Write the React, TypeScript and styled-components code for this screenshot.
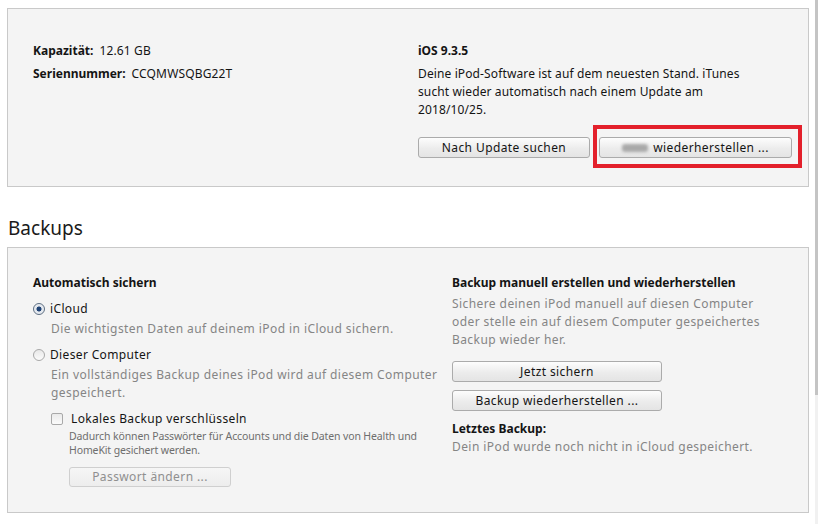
import React from "react";
import styled, { createGlobalStyle } from "styled-components";

const GlobalStyle = createGlobalStyle`
  html, body { margin: 0; padding: 0; background: #ffffff; }
  body {
    font-family: "Noto Sans", "Open Sans", sans-serif;
    font-size: 12px;
    color: #141414;
  }
  * { box-sizing: border-box; }
`;

const Page = styled.div`
  display: flex;
  width: 818px;
  height: 524px;
  overflow: hidden;
`;

const Content = styled.main`
  flex: 1;
  display: flex;
  flex-direction: column;
  padding: 8px 6px 0 7px;
`;

const Scrollbar = styled.div`
  width: 3px;
  display: flex;
  flex-direction: column;
`;

const Thumb = styled.div`
  height: 395px;
  background: #c4c4c4;
`;

const Track = styled.div`
  flex: 1;
  background: #f1f1f1;
`;

const Panel = styled.section<{ $height: number; $cols: string; $padTop: number }>`
  height: ${(p) => p.$height}px;
  background: #f4f4f4;
  border: 1px solid #c9c9c9;
  display: grid;
  grid-template-columns: ${(p) => p.$cols};
  align-items: start;
  padding: ${(p) => p.$padTop}px 0 0 25px;
`;

const Column = styled.div`
  display: flex;
  flex-direction: column;
  align-items: flex-start;
`;

const Line = styled.div<{ $mt?: number }>`
  line-height: 18px;
  margin-top: ${(p) => p.$mt ?? 0}px;
  white-space: nowrap;
  letter-spacing: 0.15px;
`;

const Label = styled.span`
  font-weight: 700;
  letter-spacing: 0;
  margin-right: 6px;
`;

const Title = styled.div<{ $mt?: number }>`
  font-weight: 700;
  line-height: 18px;
  margin-top: ${(p) => p.$mt ?? 0}px;
  white-space: nowrap;
`;

const Text = styled.p<{ $mt?: number; $indent?: number; $muted?: boolean }>`
  margin: ${(p) => p.$mt ?? 0}px 0 0 ${(p) => p.$indent ?? 0}px;
  line-height: 18px;
  letter-spacing: ${(p) => (p.$muted ? 0.42 : 0.12)}px;
  color: ${(p) => (p.$muted ? "#858585" : "#141414")};
  white-space: nowrap;
`;

const SmallText = styled.p<{ $mt?: number; $indent?: number }>`
  margin: ${(p) => p.$mt ?? 0}px 0 0 ${(p) => p.$indent ?? 0}px;
  font-size: 10.5px;
  letter-spacing: -0.12px;
  line-height: 14px;
  color: #6e6e6e;
  white-space: nowrap;
`;

const ButtonRow = styled.div<{ $mt?: number }>`
  display: flex;
  gap: 9px;
  margin-top: ${(p) => p.$mt ?? 0}px;
`;

const Button = styled.button<{ $w: number; $h?: number; $mt?: number; $ml?: number; $disabled?: boolean }>`
  width: ${(p) => p.$w}px;
  height: ${(p) => p.$h ?? 21}px;
  margin: ${(p) => p.$mt ?? 0}px 0 0 ${(p) => p.$ml ?? 0}px;
  padding: 0;
  font-family: inherit;
  font-size: 12px;
  letter-spacing: 0.4px;
  line-height: 1;
  color: ${(p) => (p.$disabled ? "#8f8f8f" : "#141414")};
  border: 1px solid ${(p) => (p.$disabled ? "#cfcfcf" : "#ababab")};
  border-radius: 3px;
  background: ${(p) =>
    p.$disabled
      ? "linear-gradient(#f6f6f6, #ededed)"
      : "linear-gradient(#fdfdfd, #ececec 55%, #e4e4e4)"};
  display: flex;
  align-items: center;
  justify-content: center;
  gap: 5px;
`;

const Blur = styled.span`
  display: inline-block;
  width: 26px;
  height: 8px;
  border-radius: 3px;
  background: #a9a9a9;
  filter: blur(1.8px);
`;

const Highlight = styled.div`
  position: relative;
  &::after {
    content: "";
    position: absolute;
    top: -12px;
    left: -6px;
    right: -10px;
    bottom: -10px;
    border: 4px solid #e3202b;
    pointer-events: none;
  }
`;

const Heading = styled.h2`
  margin: 28px 0 6px 1px;
  font-size: 19px;
  font-weight: 400;
  line-height: 26px;
  color: #1a1a1a;
`;

const OptionRow = styled.label<{ $mt?: number; $gap: number }>`
  display: flex;
  align-items: center;
  gap: ${(p) => p.$gap}px;
  margin-top: ${(p) => p.$mt ?? 0}px;
  line-height: 18px;
  letter-spacing: 0.35px;
  white-space: nowrap;
`;

const Radio = styled.span<{ $checked?: boolean }>`
  width: 12px;
  height: 12px;
  border-radius: 50%;
  border: 1px solid ${(p) => (p.$checked ? "#5d6e82" : "#a8a8a8")};
  background: ${(p) =>
    p.$checked
      ? "radial-gradient(circle, #1f4274 0 2.2px, #dfe4eb 2.8px, #f4f6f9 100%)"
      : "linear-gradient(#e8e8e8, #fbfbfb)"};
  flex: none;
`;

const Checkbox = styled.span<{ $ml?: number }>`
  width: 12px;
  height: 12px;
  margin-left: ${(p) => p.$ml ?? 0}px;
  border: 1px solid #a9a9a9;
  border-radius: 2px;
  background: linear-gradient(#eaeaea, #fbfbfb);
  flex: none;
`;

export default function App() {
  return (
    <>
      <GlobalStyle />
      <Page>
        <Content>
          <Panel $height={179} $padTop={33} $cols="385px 1fr">
            <Column>
              <Line>
                <Label>Kapazität:</Label>12.61 GB
              </Line>
              <Line $mt={5}>
                <Label>Seriennummer:</Label>CCQMWSQBG22T
              </Line>
            </Column>
            <Column>
              <Title>iOS 9.3.5</Title>
              <Text $mt={5}>
                Deine iPod-Software ist auf dem neuesten Stand. iTunes
                <br />
                sucht wieder automatisch nach einem Update am
                <br />
                2018/10/25.
              </Text>
              <ButtonRow $mt={18}>
                <Button $w={172}>Nach Update suchen</Button>
                <Highlight>
                  <Button $w={193}>
                    <Blur />
                    wiederherstellen ...
                  </Button>
                </Highlight>
              </ButtonRow>
            </Column>
          </Panel>

          <Heading>Backups</Heading>

          <Panel $height={266} $padTop={26} $cols="419px 1fr">
            <Column>
              <Title>Automatisch sichern</Title>
              <OptionRow $mt={8} $gap={5}>
                <Radio $checked />
                iCloud
              </OptionRow>
              <Text $mt={2} $indent={18} $muted>
                Die wichtigsten Daten auf deinem iPod in iCloud sichern.
              </Text>
              <OptionRow $mt={8} $gap={5}>
                <Radio />
                Dieser Computer
              </OptionRow>
              <Text $mt={2} $indent={18} $muted>
                Ein vollständiges Backup deines iPod wird auf diesem Computer
                <br />
                gespeichert.
              </Text>
              <OptionRow $mt={8} $gap={8}>
                <Checkbox $ml={18} />
                Lokales Backup verschlüsseln
              </OptionRow>
              <SmallText $mt={1} $indent={36}>
                Dadurch können Passwörter für Accounts und die Daten von Health und
                <br />
                HomeKit gesichert werden.
              </SmallText>
              <Button $w={162} $h={20} $mt={10} $ml={36} $disabled>
                Passwort ändern ...
              </Button>
            </Column>
            <Column>
              <Title>Backup manuell erstellen und wiederherstellen</Title>
              <Text $mt={3} $muted>
                Sichere deinen iPod manuell auf diesen Computer
                <br />
                oder stelle ein auf diesem Computer gespeichertes
                <br />
                Backup wieder her.
              </Text>
              <Button $w={210} $mt={12}>
                Jetzt sichern
              </Button>
              <Button $w={210} $mt={8}>
                Backup wiederherstellen ...
              </Button>
              <Title $mt={9}>Letztes Backup:</Title>
              <Text $muted>Dein iPod wurde noch nicht in iCloud gespeichert.</Text>
            </Column>
          </Panel>
        </Content>
        <Scrollbar>
          <Thumb />
          <Track />
        </Scrollbar>
      </Page>
    </>
  );
}
